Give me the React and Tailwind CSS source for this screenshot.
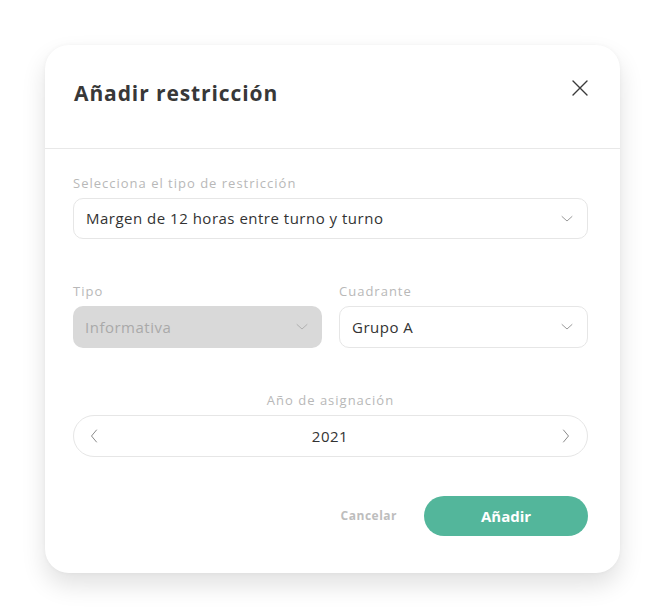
import React from "react";

const ChevronDown = ({ className = "" }) => (
  <svg className={className} width="12" height="8" viewBox="0 0 12 8" fill="none">
    <path d="M1 1.5 L6 6 L11 1.5" stroke="currentColor" strokeWidth="1" strokeLinecap="round" strokeLinejoin="round" />
  </svg>
);

const ChevronSide = ({ dir = "left" }) => (
  <svg width="8" height="14" viewBox="0 0 8 14" fill="none">
    {dir === "left" ? (
      <path d="M6.5 1 L1.5 7 L6.5 13" stroke="currentColor" strokeWidth="1" strokeLinecap="round" strokeLinejoin="round" />
    ) : (
      <path d="M1.5 1 L6.5 7 L1.5 13" stroke="currentColor" strokeWidth="1" strokeLinecap="round" strokeLinejoin="round" />
    )}
  </svg>
);

export default function App() {
  const font = { fontFamily: "'Open Sans', 'Noto Sans', sans-serif" };
  return (
    <div className="min-h-screen bg-white pt-[45px] pl-[45px]" style={font}>
      <div className="w-[575px] rounded-[24px] bg-white shadow-[0_12px_24px_rgba(0,0,0,0.12),0_0_4px_rgba(0,0,0,0.04)]">
        <div className="flex h-[104px] items-start justify-between border-b border-[#e8e8e8] pl-[29px] pr-[32px] pt-[34px]">
          <h1 className="text-[21px] font-bold leading-[28px] tracking-[0.9px] text-[#383838]">Añadir restricción</h1>
          <svg className="mt-[1px] text-[#3a3a3a]" width="16" height="16" viewBox="0 0 16 16" fill="none">
            <path d="M1 1 L15 15 M15 1 L1 15" stroke="currentColor" strokeWidth="1.4" strokeLinecap="round" />
          </svg>
        </div>

        <div className="pl-[28px] pr-[32px] pt-[26px] pb-[37px]">
          <div className="mb-[7px] text-[13px] leading-[16px] tracking-[1px] text-[#b8b8b8]">Selecciona el tipo de restricción</div>
          <div className="flex h-[41px] items-center justify-between rounded-[10px] border border-[#e6e6e6] pl-[12px] pr-[14px]">
            <span className="text-[15px] tracking-[0.5px] text-[#333]">Margen de 12 horas entre turno y turno</span>
            <ChevronDown className="text-[#9a9a9a]" />
          </div>

          <div className="mt-[44px] grid grid-cols-2 gap-[17px]">
            <div>
              <div className="mb-[7px] text-[13px] leading-[16px] tracking-[1px] text-[#b8b8b8]">Tipo</div>
              <div className="flex h-[42px] items-center justify-between rounded-[10px] bg-[#d9d9d9] pl-[12px] pr-[14px]">
                <span className="text-[15px] tracking-[0.5px] text-[#a9a9a9]">Informativa</span>
                <ChevronDown className="text-[#b0b0b0]" />
              </div>
            </div>
            <div>
              <div className="mb-[7px] text-[13px] leading-[16px] tracking-[1px] text-[#b8b8b8]">Cuadrante</div>
              <div className="flex h-[42px] items-center justify-between rounded-[10px] border border-[#e6e6e6] pl-[12px] pr-[14px]">
                <span className="text-[15px] tracking-[0.5px] text-[#333]">Grupo A</span>
                <ChevronDown className="text-[#9a9a9a]" />
              </div>
            </div>
          </div>

          <div className="mt-[44px] mb-[7px] text-center text-[13px] leading-[16px] tracking-[1px] text-[#b8b8b8]">Año de asignación</div>
          <div className="flex h-[42px] items-center justify-between rounded-full border border-[#e6e6e6] pl-[16px] pr-[17px] text-[#8a8a8a]">
            <ChevronSide dir="left" />
            <span className="text-[15px] tracking-[0.5px] text-[#333]">2021</span>
            <ChevronSide dir="right" />
          </div>

          <div className="mt-[39px] flex items-center justify-end gap-[27px]">
            <span className="text-[12px] font-bold tracking-[0.5px] text-[#bdbdbd]">Cancelar</span>
            <button className="h-[40px] w-[164px] rounded-full bg-[#53b69b] text-[15px] font-bold tracking-[0px] text-white">Añadir</button>
          </div>
        </div>
      </div>
    </div>
  );
}
